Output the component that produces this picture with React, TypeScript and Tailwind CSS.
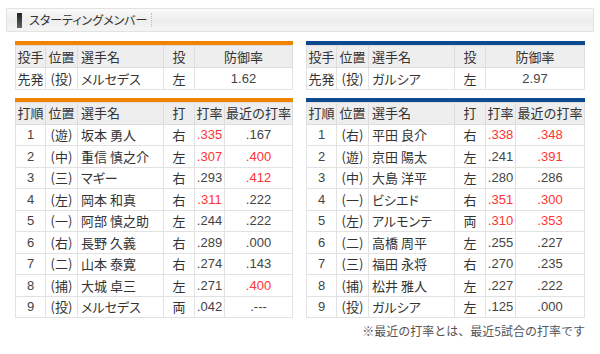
import React from 'react';

type Batter = {
  order: number;
  pos: string;
  name: string;
  hand: string;
  avg: string;
  recent: string;
  avgHot?: boolean;
  recentHot?: boolean;
  visited?: boolean;
};

const giants: Batter[] = [
  { order: 1, pos: '(遊)', name: '坂本 勇人', hand: '右', avg: '.335', recent: '.167', avgHot: true, visited: true },
  { order: 2, pos: '(中)', name: '重信 慎之介', hand: '左', avg: '.307', recent: '.400', avgHot: true, recentHot: true, visited: true },
  { order: 3, pos: '(三)', name: 'マギー', hand: '右', avg: '.293', recent: '.412', recentHot: true },
  { order: 4, pos: '(左)', name: '岡本 和真', hand: '右', avg: '.311', recent: '.222', avgHot: true },
  { order: 5, pos: '(一)', name: '阿部 慎之助', hand: '左', avg: '.244', recent: '.222' },
  { order: 6, pos: '(右)', name: '長野 久義', hand: '右', avg: '.289', recent: '.000' },
  { order: 7, pos: '(二)', name: '山本 泰寛', hand: '右', avg: '.274', recent: '.143' },
  { order: 8, pos: '(捕)', name: '大城 卓三', hand: '左', avg: '.271', recent: '.400', recentHot: true },
  { order: 9, pos: '(投)', name: 'メルセデス', hand: '両', avg: '.042', recent: '.---' },
];

const dragons: Batter[] = [
  { order: 1, pos: '(右)', name: '平田 良介', hand: '右', avg: '.338', recent: '.348', avgHot: true, recentHot: true },
  { order: 2, pos: '(遊)', name: '京田 陽太', hand: '左', avg: '.241', recent: '.391', recentHot: true },
  { order: 3, pos: '(中)', name: '大島 洋平', hand: '左', avg: '.280', recent: '.286' },
  { order: 4, pos: '(一)', name: 'ビシエド', hand: '右', avg: '.351', recent: '.300', avgHot: true, recentHot: true },
  { order: 5, pos: '(左)', name: 'アルモンテ', hand: '両', avg: '.310', recent: '.353', avgHot: true, recentHot: true },
  { order: 6, pos: '(二)', name: '高橋 周平', hand: '左', avg: '.255', recent: '.227' },
  { order: 7, pos: '(三)', name: '福田 永将', hand: '右', avg: '.270', recent: '.235' },
  { order: 8, pos: '(捕)', name: '松井 雅人', hand: '左', avg: '.227', recent: '.222' },
  { order: 9, pos: '(投)', name: 'ガルシア', hand: '左', avg: '.125', recent: '.000' },
];

const th = 'border border-[#dddddd] bg-[#eeeeee] font-normal text-[13px] text-[#333] h-[22px] p-0';
const td = 'border border-[#e2e2e2] text-[13px] text-[#333] h-[21.5px] p-0';
const num = 'font-["Liberation_Sans",sans-serif] text-[11px] text-[#444]';
const link = '[font-feature-settings:"palt"]';

function PitcherTable({ bar, name, hand, era }: { bar: string; name: string; hand: string; era: string }) {
  return (
    <div>
      <div className={`h-[4px] ${bar}`} />
      <table className="w-full table-fixed border-collapse">
        <colgroup>
          <col className="w-[30px]" />
          <col className="w-[32px]" />
          <col className="w-[86px]" />
          <col className="w-[31px]" />
          <col />
        </colgroup>
        <thead>
          <tr>
            <th className={`${th} text-center`}>投手</th>
            <th className={`${th} text-center`}>位置</th>
            <th className={`${th} text-left pl-[3px]`}>選手名</th>
            <th className={`${th} text-center`}>投</th>
            <th className={`${th} text-center`}>防御率</th>
          </tr>
        </thead>
        <tbody>
          <tr>
            <td className={`${td} text-center`}>先発</td>
            <td className={`${td} text-center`}>(投)</td>
            <td className={`${td} pl-[3px] ${link} text-[#2e82c3]`}>{name}</td>
            <td className={`${td} text-center`}>{hand}</td>
            <td className={`${td} text-center ${num}`}>{era}</td>
          </tr>
        </tbody>
      </table>
    </div>
  );
}

function LineupTable({ bar, rows }: { bar: string; rows: Batter[] }) {
  return (
    <div>
      <div className={`h-[4px] ${bar}`} />
      <table className="w-full table-fixed border-collapse">
        <colgroup>
          <col className="w-[30px]" />
          <col className="w-[32px]" />
          <col className="w-[86px]" />
          <col className="w-[31px]" />
          <col className="w-[30px]" />
          <col />
        </colgroup>
        <thead>
          <tr>
            <th className={`${th} text-center`}>打順</th>
            <th className={`${th} text-center`}>位置</th>
            <th className={`${th} text-left pl-[3px]`}>選手名</th>
            <th className={`${th} text-center`}>打</th>
            <th className={`${th} text-center`}>打率</th>
            <th className={`${th} text-center`}>最近の打率</th>
          </tr>
        </thead>
        <tbody>
          {rows.map((r) => (
            <tr key={r.order}>
              <td className={`${td} text-center ${num}`}>{r.order}</td>
              <td className={`${td} text-center`}>{r.pos}</td>
              <td className={`${td} pl-[3px] ${link} ${r.visited ? 'text-[#7a3d9c]' : 'text-[#2e82c3]'}`}>{r.name}</td>
              <td className={`${td} text-center`}>{r.hand}</td>
              <td className={`${td} text-center ${num} ${r.avgHot ? 'text-[#ff3333]' : ''}`}>{r.avg}</td>
              <td className={`${td} text-center ${num} ${r.recentHot ? 'text-[#ff3333]' : ''}`}>{r.recent}</td>
            </tr>
          ))}
        </tbody>
      </table>
    </div>
  );
}

export default function App() {
  return (
    <div className="w-[600px] h-[354px] bg-white font-['Noto_Sans_CJK_JP',sans-serif] text-[#333]">
      <div className="pt-[8px] px-[6px]">
        <div className="h-[24px] border border-[#e2e2e2] bg-gradient-to-b from-[#fbfbfb] via-[#ededed] to-[#f5f5f5] flex items-center pl-[10px]">
          <div className="w-[5px] h-[15px] bg-gradient-to-b from-[#222] to-[#666]" />
          <span className="ml-[7px] text-[12px] text-[#333] leading-none [font-feature-settings:'palt']">スターティングメンバー</span>
          <div className="ml-[4px] h-[14px] border-l border-dotted border-[#bbbbbb]" />
        </div>
      </div>

      <div className="px-[15px] pt-[9px] flex gap-[13px]">
        <div className="w-[278px] flex flex-col gap-[8px]">
          <PitcherTable bar="bg-[#f08300]" name="メルセデス" hand="左" era="1.62" />
          <LineupTable bar="bg-[#f08300]" rows={giants} />
        </div>
        <div className="w-[279px] flex flex-col gap-[8px]">
          <PitcherTable bar="bg-[#0e4a8e]" name="ガルシア" hand="左" era="2.97" />
          <LineupTable bar="bg-[#0e4a8e]" rows={dragons} />
        </div>
      </div>

      <div className="px-[15px] pt-[4px] text-right text-[12px] text-[#555]">
        ※最近の打率とは、最近5試合の打率です
      </div>
    </div>
  );
}
